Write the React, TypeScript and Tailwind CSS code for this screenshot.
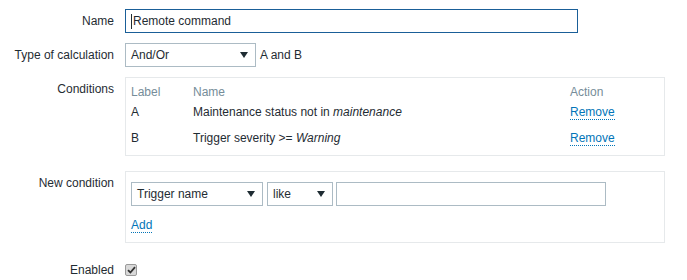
const FONT = "font-['Liberation_Sans',Arial,sans-serif]";

const Arrow = () => (
  <svg width="8" height="6" viewBox="0 0 8 6" className="shrink-0">
    <path d="M0 0 L8 0 L4 6 Z" fill="#1f2c33" />
  </svg>
);

const Select = ({ value, width }: { value: string; width: string }) => (
  <div
    className={`${width} h-[24px] border border-[#acbbc4] bg-white flex items-center justify-between pl-[5px] pr-[7px]`}
  >
    <span>{value}</span>
    <Arrow />
  </div>
);

const Link = ({ children }: { children: string }) => (
  <span className="text-[#0275b8] border-b border-dotted border-[#0275b8] leading-[15px]">
    {children}
  </span>
);

const Row = ({
  label,
  className = '',
  labelClass = 'items-center',
  children,
}: {
  label: string;
  className?: string;
  labelClass?: string;
  children: React.ReactNode;
}) => (
  <div className={`flex ${className}`}>
    <div className={`w-[115px] pr-[1px] flex justify-end ${labelClass}`}>{label}</div>
    <div className="ml-[10px] flex items-center">{children}</div>
  </div>
);

export default function App() {
  return (
    <div className={`${FONT} text-[12px] text-[#1f2c33] bg-white w-[687px] h-[280px] pt-[9px]`}>
      <Row label="Name">
        <div className="w-[453px] h-[24px] border border-[#1a5f98] flex items-center pl-[5px]">
          <span className="w-px h-[15px] bg-[#1f2c33] mr-[1px]" />
          <span>Remote command</span>
        </div>
      </Row>

      <Row label="Type of calculation" className="mt-[10px]">
        <Select value="And/Or" width="w-[131px]" />
        <span className="ml-[4px]">A and B</span>
      </Row>

      <Row label="Conditions" className="mt-[10px]" labelClass="items-start pt-[3px]">
        <div className="w-[540px] border border-[#e6e9eb] px-[5px] pt-[5px] pb-[4px]">
          <div className="grid grid-cols-[62px_1fr_89px] text-[#768d99] h-[16px] items-center">
            <span>Label</span>
            <span>Name</span>
            <span>Action</span>
          </div>
          <div className="grid grid-cols-[62px_1fr_89px] h-[26px] items-center">
            <span>A</span>
            <span>
              Maintenance status not in <i>maintenance</i>
            </span>
            <span>
              <Link>Remove</Link>
            </span>
          </div>
          <div className="grid grid-cols-[62px_1fr_89px] h-[26px] items-center">
            <span>B</span>
            <span>
              Trigger severity &gt;= <i>Warning</i>
            </span>
            <span>
              <Link>Remove</Link>
            </span>
          </div>
        </div>
      </Row>

      <Row label="New condition" className="mt-[15px]" labelClass="items-start pt-[3px]">
        <div className="w-[540px] h-[72px] border border-[#e6e9eb] px-[5px] pt-[10px]">
          <div className="flex">
            <Select value="Trigger name" width="w-[132px]" />
            <div className="ml-[4px]">
              <Select value="like" width="w-[66px]" />
            </div>
            <div className="ml-[3px] w-[270px] h-[24px] border border-[#acbbc4] bg-white" />
          </div>
          <div className="mt-[10px]">
            <Link>Add</Link>
          </div>
        </div>
      </Row>

      <Row label="Enabled" className="mt-[18px]">
        <span className="w-[12px] h-[12px] rounded-[2px] border border-[#9a9a9a] bg-[#d9d9d9] flex items-center justify-center">
          <svg width="9" height="8" viewBox="0 0 9 8">
            <path d="M1 4.2 L3.4 6.5 L8 1.2" stroke="#333" strokeWidth="1.8" fill="none" />
          </svg>
        </span>
      </Row>
    </div>
  );
}
